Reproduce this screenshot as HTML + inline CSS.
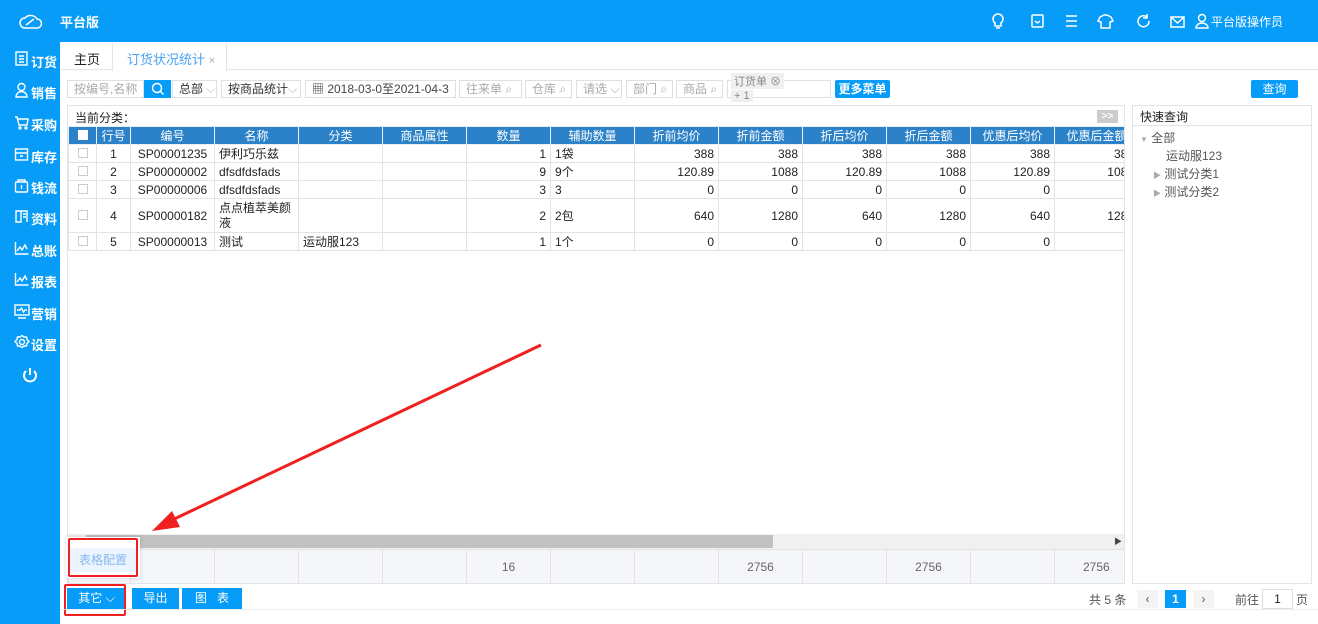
<!DOCTYPE html>
<html><head><meta charset="utf-8"><style>
*{box-sizing:border-box;margin:0;padding:0}
body{width:1318px;height:624px;overflow:hidden;background:#fff;font-family:"Liberation Sans","Noto Sans CJK SC",sans-serif;font-size:12px;color:#222;position:relative}
.abs{position:absolute}
.top{left:0;top:0;width:1318px;height:42px;background:#069cf7}
.side{left:0;top:42px;width:60px;height:582px;background:#069cf7}
.side div{position:absolute;left:31px;color:#fff;font-size:13px;font-weight:bold}
.inp{position:absolute;top:80px;height:18px;border:1px solid #dcdfe6;color:#aaa;font-size:12px;line-height:16px;padding-left:6px;overflow:hidden;white-space:nowrap;background:#fff}
table{border-collapse:collapse;table-layout:fixed}
td{border:1px solid #e3e3e3;height:18px;padding:0 4px;font-size:12px;line-height:14px;overflow:hidden;white-space:nowrap}
th{background:#2c82c9;color:#fff;font-weight:normal;border:1px solid #e8eef5;height:18px;font-size:12px;overflow:hidden;white-space:nowrap}
.r{text-align:right}.c{text-align:center}
.cb{display:inline-block;width:10px;height:10px;border:1px solid #ccc;background:#fff}
.btn{position:absolute;top:588px;height:21px;background:#069cf7;color:#fff;text-align:center;line-height:21px;font-size:12px}
</style></head><body>
<div class="abs top"></div>
<svg class="abs" style="left:18px;top:11px" width="24" height="20" viewBox="0 0 24 20"><path d="M7 17a5 5 0 0 1 0-10a7 6 0 0 1 12 1a4.5 4.5 0 0 1 0 9z M8 14l8-6" fill="none" stroke="#fff" stroke-width="1.5"/></svg>
<div class="abs" style="left:60px;top:12px;color:#fff;font-size:13px;font-weight:bold">平台版</div>
<svg class="abs" style="left:990px;top:12px" width="200" height="20" fill="none" stroke="#fff" stroke-width="1.5">
<path d="M5 14v-3a5 5 0 1 1 6 0v3z M6 16h4"/>
<rect x="42" y="3" width="11" height="12" rx="1"/><path d="M45 9l2.5 2l2.5-2"/>
<path d="M76 4h11M76 9h11M76 14h11"/>
<path d="M110 5l4-2h3l4 2l2 4l-3 1v6h-9v-6l-3-1z"/>
<path d="M157 5a5.5 5.5 0 1 0 2 4M157 2v4h-4"/>
<rect x="181" y="5" width="13" height="10"/><path d="M181 5l6.5 6l6.5-6"/>
</svg>
<svg class="abs" style="left:1195px;top:13px" width="14" height="16" fill="none" stroke="#fff" stroke-width="1.4"><circle cx="7" cy="5" r="3.5"/><path d="M1 15a6 5 0 0 1 12 0z"/></svg>
<div class="abs" style="left:1211px;top:13px;color:#fff;font-size:12px">平台版操作员</div>
<div class="abs side">
<div style="top:10px">订货</div><div style="top:41px">销售</div><div style="top:73px">采购</div><div style="top:105px">库存</div><div style="top:136px">钱流</div><div style="top:167px">资料</div><div style="top:199px">总账</div><div style="top:230px">报表</div><div style="top:262px">营销</div><div style="top:293px">设置</div>
</div>
<svg class="abs" style="left:14px;top:50px" width="16" height="340" fill="none" stroke="#fff" stroke-width="1.4">
<rect x="2" y="2" width="11" height="13"/><path d="M5 6h5M5 9h5M5 12h5"/>
<g transform="translate(0,32)"><circle cx="7.5" cy="5" r="3.5"/><path d="M2 15a5.5 5.5 0 0 1 11 0z"/></g>
<g transform="translate(0,64)"><path d="M1 3h2l2 8h8l1-6H4"/><circle cx="6" cy="14" r="1"/><circle cx="12" cy="14" r="1"/></g>
<g transform="translate(0,96)"><rect x="1.5" y="3" width="12" height="11"/><path d="M1.5 7h12M6 10h3"/></g>
<g transform="translate(0,127)"><rect x="1.5" y="5" width="12" height="10" rx="1"/><path d="M4 5V3h7v2M7.5 8v4"/></g>
<g transform="translate(0,158)"><path d="M2 3h5v11H2zM7 3h6v11M9 6h3M9 9h3"/></g>
<g transform="translate(0,190)"><path d="M1.5 2v12h13M3 11l3-4l2 3l3-5l2 4"/></g>
<g transform="translate(0,221)"><path d="M1.5 2v12h13M3 11l3-4l2 3l3-5l2 4"/></g>
<g transform="translate(0,253)"><rect x="1" y="2" width="14" height="10"/><path d="M4 15h8M3 7h3l1.5-2l2 4l1.5-2h2"/></g>
<g transform="translate(0,284)"><circle cx="8" cy="8" r="2.5"/><path d="M8 1.5l2 1.5l2.5 0l.5 2.5l2 2l-2 2l-.5 2.5l-2.5 0l-2 1.5l-2-1.5l-2.5 0l-.5-2.5l-2-2l2-2l.5-2.5l2.5 0z"/></g>
</svg>
<svg class="abs" style="left:21px;top:366px" width="18" height="18" fill="none" stroke="#fff" stroke-width="2"><path d="M5 5a6 6 0 1 0 8 0M9 2v7"/></svg>
<div class="abs" style="left:60px;top:42px;width:1258px;height:28px;background:#fff;border-bottom:1px solid #e3e3ea"></div>
<div class="abs" style="left:74px;top:49px;font-size:13px">主页</div>
<div class="abs" style="left:112px;top:43px;width:115px;height:28px;border-left:1px solid #e3e3ea;border-right:1px solid #e3e3ea;background:#fff"></div>
<div class="abs" style="left:127px;top:49px;font-size:13px;color:#4aa3f5">订货状况统计 <span style="color:#aaa;font-size:11px">×</span></div>
<div class="inp" style="left:67px;width:77px">按编号,名称</div>
<div class="abs" style="left:144px;top:80px;width:27px;height:18px;background:#069cf7"></div>
<svg class="abs" style="left:151px;top:82px" width="14" height="14" fill="none" stroke="#fff" stroke-width="1.5"><circle cx="6" cy="6" r="4.5"/><path d="M9.5 9.5l3 3"/></svg>
<div class="inp" style="left:172px;width:45px;color:#333">总部 <span style="color:#bbb">⌵</span></div>
<div class="inp" style="left:221px;width:80px;color:#333">按商品统计<span style="color:#bbb">⌵</span></div>
<div class="inp" style="left:305px;width:151px;color:#444">▦ 2018-03-0至2021-04-3</div>
<div class="inp" style="left:459px;width:63px">往来单 ⌕</div>
<div class="inp" style="left:525px;width:47px">仓库 ⌕</div>
<div class="inp" style="left:576px;width:46px">请选 ⌵</div>
<div class="inp" style="left:626px;width:47px">部门 ⌕</div>
<div class="inp" style="left:676px;width:47px">商品 ⌕</div>
<div class="inp" style="left:727px;width:104px"></div>
<div class="abs" style="left:731px;top:73px;background:#f0f0f0;color:#888;font-size:11px;padding:0 3px">订货单 ⊗</div>
<div class="abs" style="left:731px;top:90px;background:#f0f0f0;color:#888;font-size:11px;padding:0 3px">+ 1</div>
<div class="abs" style="left:835px;top:80px;width:55px;height:18px;background:#069cf7;color:#fff;font-size:12px;font-weight:bold;line-height:18px;text-align:center;border-radius:2px">更多菜单</div>
<div class="abs" style="left:1251px;top:80px;width:47px;height:18px;background:#069cf7;color:#fff;line-height:18px;text-align:center;border-radius:2px">查询</div>
<div class="abs" style="left:67px;top:105px;width:1058px;height:479px;border:1px solid #e3e3ea;overflow:hidden">
<div style="position:absolute;left:7px;top:3px">当前分类：</div>
<div style="position:absolute;left:1029px;top:4px;width:21px;height:13px;background:#ccc;color:#fff;font-size:10px;text-align:center;line-height:13px;font-weight:bold">&gt;&gt;</div>
<table style="position:absolute;left:0;top:20px;width:1070px">
<colgroup><col style="width:28px"><col style="width:34px"><col style="width:84px"><col style="width:84px"><col style="width:84px"><col style="width:84px"><col style="width:84px"><col style="width:84px"><col style="width:84px"><col style="width:84px"><col style="width:84px"><col style="width:84px"><col style="width:84px"><col style="width:84px"></colgroup>
<tr><th><span class="cb" style="border:none"></span></th><th>行号</th><th>编号</th><th>名称</th><th>分类</th><th>商品属性</th><th>数量</th><th>辅助数量</th><th>折前均价</th><th>折前金额</th><th>折后均价</th><th>折后金额</th><th>优惠后均价</th><th>优惠后金额</th></tr>
<tr><td class="c"><span class="cb"></span></td><td class="c">1</td><td class="c">SP00001235</td><td>伊利巧乐兹</td><td></td><td></td><td class="r">1</td><td>1袋</td><td class="r">388</td><td class="r">388</td><td class="r">388</td><td class="r">388</td><td class="r">388</td><td class="r">388</td></tr>
<tr><td class="c"><span class="cb"></span></td><td class="c">2</td><td class="c">SP00000002</td><td>dfsdfdsfads</td><td></td><td></td><td class="r">9</td><td>9个</td><td class="r">120.89</td><td class="r">1088</td><td class="r">120.89</td><td class="r">1088</td><td class="r">120.89</td><td class="r">1088</td></tr>
<tr><td class="c"><span class="cb"></span></td><td class="c">3</td><td class="c">SP00000006</td><td>dfsdfdsfads</td><td></td><td></td><td class="r">3</td><td>3</td><td class="r">0</td><td class="r">0</td><td class="r">0</td><td class="r">0</td><td class="r">0</td><td class="r"></td></tr>
<tr><td class="c" style="height:34px"><span class="cb"></span></td><td class="c">4</td><td class="c">SP00000182</td><td style="white-space:normal;line-height:15px">点点植萃美颜液</td><td></td><td></td><td class="r">2</td><td>2包</td><td class="r">640</td><td class="r">1280</td><td class="r">640</td><td class="r">1280</td><td class="r">640</td><td class="r">1280</td></tr>
<tr><td class="c"><span class="cb"></span></td><td class="c">5</td><td class="c">SP00000013</td><td>测试</td><td>运动服123</td><td></td><td class="r">1</td><td>1个</td><td class="r">0</td><td class="r">0</td><td class="r">0</td><td class="r">0</td><td class="r">0</td><td class="r"></td></tr>
</table>
<div style="position:absolute;left:0;top:428px;width:1058px;height:15px;background:#f0f0f0"></div>
<div style="position:absolute;left:18px;top:429px;width:687px;height:13px;background:#c1c1c1"></div>
<div style="position:absolute;left:1046px;top:430px;font-size:8px;color:#444">▶</div>
<table style="position:absolute;left:0;top:443px;width:1070px;background:#f5f6fa">
<colgroup><col style="width:62px"><col style="width:84px"><col style="width:84px"><col style="width:84px"><col style="width:84px"><col style="width:84px"><col style="width:84px"><col style="width:84px"><col style="width:84px"><col style="width:84px"><col style="width:84px"><col style="width:84px"><col style="width:84px"></colgroup>
<tr style="color:#666"><td style="height:34px"></td><td></td><td></td><td></td><td></td><td class="c">16</td><td></td><td></td><td class="c">2756</td><td></td><td class="c">2756</td><td></td><td style="padding-left:28px">2756</td></tr>
</table>
</div>
<div class="abs" style="left:66px;top:537px;width:74px;height:41px;background:#fff;box-shadow:0 0 4px rgba(0,0,0,.15)"></div>
<div class="abs" style="left:70px;top:548px;width:66px;height:24px;background:#ecf5ff;color:#8cb8ef;line-height:24px;text-align:center;font-size:12px">表格配置</div>
<div class="abs" style="left:68px;top:538px;width:70px;height:39px;border:2px solid #f02020;border-radius:2px"></div>
<div class="abs" style="left:1132px;top:105px;width:180px;height:479px;border:1px solid #e3e3ea"></div>
<div class="abs" style="left:1132px;top:125px;width:180px;height:1px;background:#e3e3ea"></div>
<div class="abs" style="left:1140px;top:108px">快速查询</div>
<div class="abs" style="left:1140px;top:129px;color:#555"><span style="color:#aaa;font-size:8px">▼</span> 全部</div>
<div class="abs" style="left:1166px;top:147px;color:#555">运动服123</div>
<div class="abs" style="left:1153px;top:165px;color:#555"><span style="color:#aaa;font-size:8px">▶</span> 测试分类1</div>
<div class="abs" style="left:1153px;top:183px;color:#555"><span style="color:#aaa;font-size:8px">▶</span> 测试分类2</div>
<div class="btn" style="left:67px;width:59px">其它 ⌵</div>
<div class="btn" style="left:132px;width:47px">导出</div>
<div class="btn" style="left:182px;width:60px">图&nbsp;&nbsp;&nbsp;表</div>
<div class="abs" style="left:64px;top:584px;width:62px;height:32px;border:2px solid #f02020;border-radius:2px"></div>
<div class="abs" style="left:60px;top:609px;width:1258px;height:1px;background:#eee"></div>
<div class="abs" style="left:1089px;top:591px;color:#555">共 5 条</div>
<div class="abs" style="left:1137px;top:590px;width:21px;height:18px;background:#f4f4f5;text-align:center;line-height:18px;color:#555">‹</div>
<div class="abs" style="left:1165px;top:590px;width:21px;height:18px;background:#069cf7;color:#fff;text-align:center;line-height:18px;font-weight:bold">1</div>
<div class="abs" style="left:1193px;top:590px;width:21px;height:18px;background:#f4f4f5;text-align:center;line-height:18px;color:#555">›</div>
<div class="abs" style="left:1235px;top:591px;color:#555">前往</div>
<div class="abs" style="left:1262px;top:589px;width:31px;height:20px;border:1px solid #dcdfe6;text-align:center;line-height:18px">1</div>
<div class="abs" style="left:1296px;top:591px;color:#555">页</div>
<svg class="abs" style="left:0;top:0" width="1318" height="624"><line x1="541" y1="345" x2="170" y2="521" stroke="#f02020" stroke-width="3"/><polygon points="152,531 172,511 180,527" fill="#f02020"/></svg>
</body></html>
